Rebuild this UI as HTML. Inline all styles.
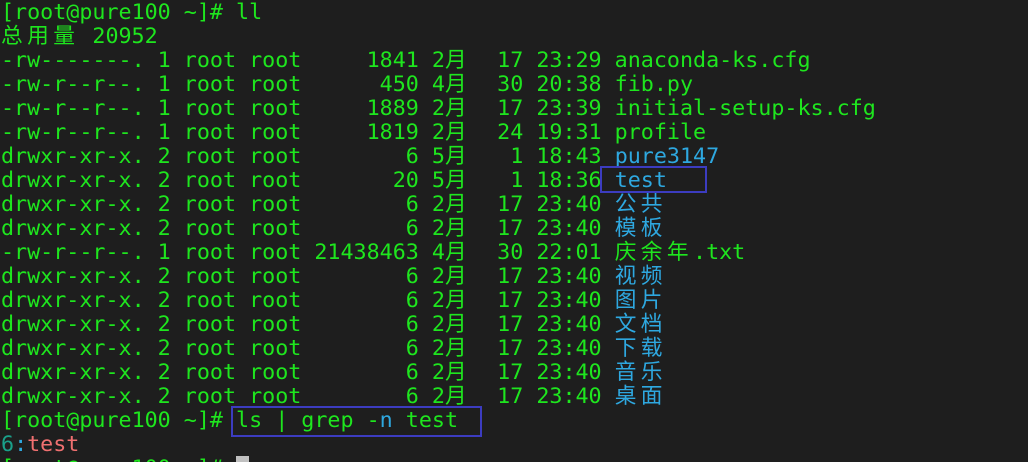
<!DOCTYPE html>
<html><head><meta charset="utf-8"><style>
html,body{margin:0;padding:0;background:#1e1e1e;width:1028px;height:462px;overflow:hidden;position:relative}
pre{margin:0;position:absolute;left:1px;top:1px;font-family:"DejaVu Sans Mono","Noto Sans CJK SC",monospace;font-size:21.7px;line-height:24px;color:#1ee61e;white-space:pre}
.w{display:inline-block;width:26.12px;text-align:left}
.b{color:#2ea8e0}
.t{color:#1aa08a}
.r{color:#f07070}
.box{position:absolute;border:2px solid #3c3cc0;box-sizing:border-box}
.cur{position:absolute;left:236px;top:456px;width:13px;height:20px;background:#c0c0c0}
</style></head><body>
<pre>[root@pure100 ~]# ll
<span class="w">总</span><span class="w">用</span><span class="w">量</span> 20952
-rw-------. 1 root root     1841 2<span class="w">月</span>  17 23:29 anaconda-ks.cfg
-rw-r--r--. 1 root root      450 4<span class="w">月</span>  30 20:38 fib.py
-rw-r--r--. 1 root root     1889 2<span class="w">月</span>  17 23:39 initial-setup-ks.cfg
-rw-r--r--. 1 root root     1819 2<span class="w">月</span>  24 19:31 profile
drwxr-xr-x. 2 root root        6 5<span class="w">月</span>   1 18:43 <span class="b">pure3147</span>
drwxr-xr-x. 2 root root       20 5<span class="w">月</span>   1 18:36 <span class="b">test</span>
drwxr-xr-x. 2 root root        6 2<span class="w">月</span>  17 23:40 <span class="b"><span class="w">公</span><span class="w">共</span></span>
drwxr-xr-x. 2 root root        6 2<span class="w">月</span>  17 23:40 <span class="b"><span class="w">模</span><span class="w">板</span></span>
-rw-r--r--. 1 root root 21438463 4<span class="w">月</span>  30 22:01 <span class="w">庆</span><span class="w">余</span><span class="w">年</span>.txt
drwxr-xr-x. 2 root root        6 2<span class="w">月</span>  17 23:40 <span class="b"><span class="w">视</span><span class="w">频</span></span>
drwxr-xr-x. 2 root root        6 2<span class="w">月</span>  17 23:40 <span class="b"><span class="w">图</span><span class="w">片</span></span>
drwxr-xr-x. 2 root root        6 2<span class="w">月</span>  17 23:40 <span class="b"><span class="w">文</span><span class="w">档</span></span>
drwxr-xr-x. 2 root root        6 2<span class="w">月</span>  17 23:40 <span class="b"><span class="w">下</span><span class="w">载</span></span>
drwxr-xr-x. 2 root root        6 2<span class="w">月</span>  17 23:40 <span class="b"><span class="w">音</span><span class="w">乐</span></span>
drwxr-xr-x. 2 root root        6 2<span class="w">月</span>  17 23:40 <span class="b"><span class="w">桌</span><span class="w">面</span></span>
[root@pure100 ~]# ls | grep -<span class="b">n</span> test
<span class="t">6</span><span class="b">:</span><span class="r">test</span>
[root@pure100 ~]# </pre>
<div class="box" style="left:600px;top:166px;width:107px;height:27px"></div>
<div class="box" style="left:231px;top:406px;width:251px;height:31px"></div>
<div class="cur"></div>
</body></html>
